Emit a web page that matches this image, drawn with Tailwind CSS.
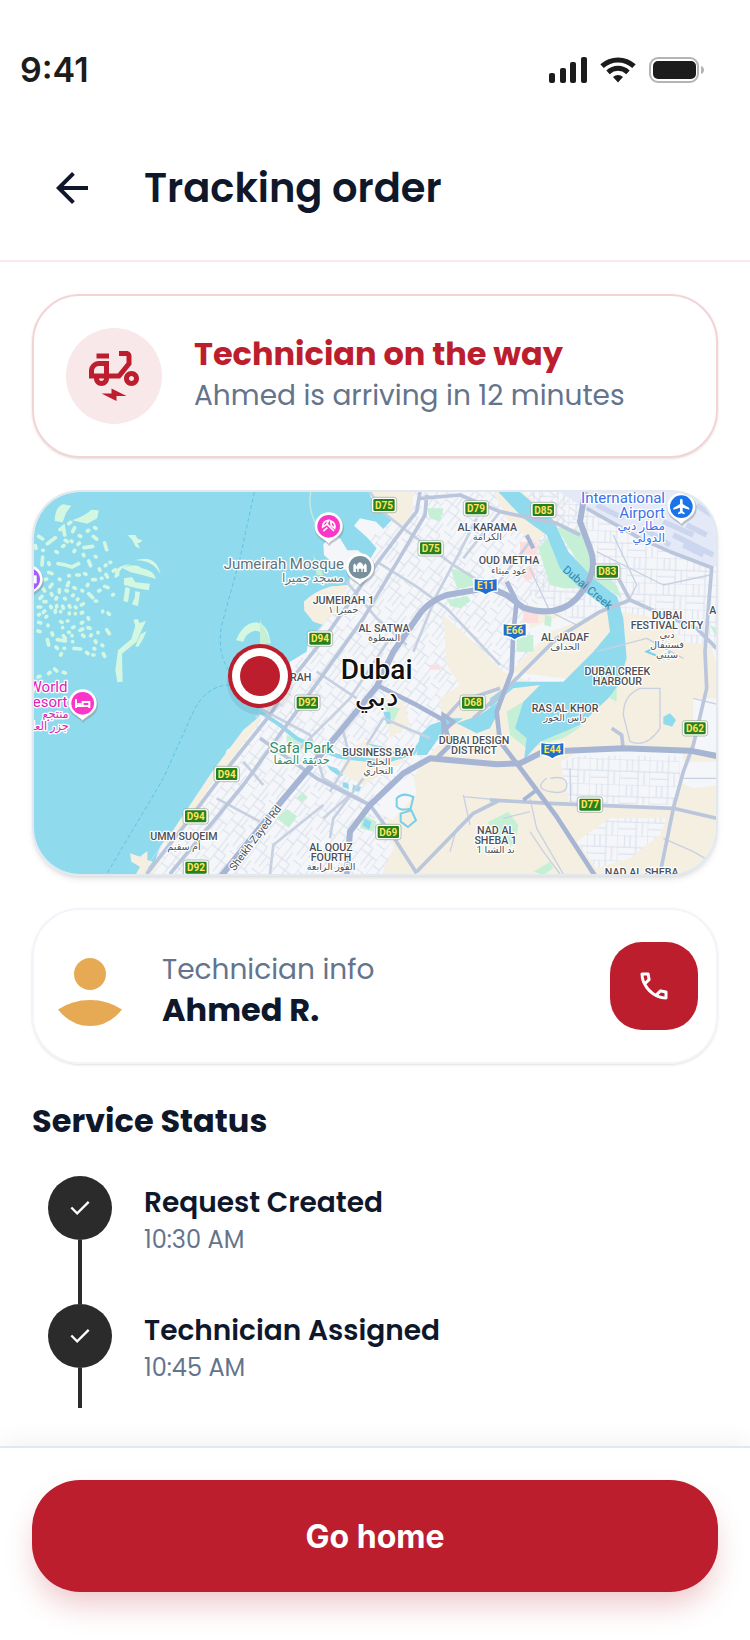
<!DOCTYPE html>
<html lang="en">
<head>
  <meta charset="UTF-8" />
  <meta name="viewport" content="width=device-width, initial-scale=1.0" />
  <title>Tracking order</title>
  <script src="https://cdn.jsdelivr.net/npm/@tailwindcss/browser@4"></script>
</head>
<body class="bg-white font-[Poppins,Inter,sans-serif] text-[#0f172a]">
<div class="flex min-h-screen flex-col">

  <!-- Status bar -->
  <div class="flex h-[116px] items-center justify-between pt-6 pr-[46px] pl-5 text-[#1c1c1c]">
    <span class="font-[Inter,sans-serif] text-[34px] leading-10 font-semibold">9:41</span>
    <div class="flex items-center gap-3">
      <svg class="h-[26px] w-[40px]" viewBox="0 0 40 26" fill="currentColor" aria-hidden="true">
        <rect x="1" y="16" width="6" height="10" rx="2" />
        <rect x="12" y="11" width="6" height="15" rx="2" />
        <rect x="22" y="5" width="6" height="21" rx="2" />
        <rect x="33" y="0" width="6" height="26" rx="2" />
      </svg>
      <svg class="h-[26px] w-[36px]" viewBox="0 0 36 26" fill="none" stroke="currentColor" aria-hidden="true">
        <path d="M2 9.2C11 .8 25 .8 34 9.2" stroke-width="5" />
        <path d="M8 15.3C14 10 22 10 28 15.3" stroke-width="5" />
        <path d="M18 25.500l-5-5.400c2.800-2.700 7.200-2.700 10 0z" fill="currentColor" stroke="none" />
      </svg>
      <svg class="h-[26px] w-[56px]" viewBox="0 0 56 26" aria-hidden="true">
        <rect x="2" y="1" width="48" height="24" rx="8" fill="none" stroke="#b4b4b4" stroke-width="2" />
        <rect x="5" y="4" width="43" height="18" rx="5" fill="currentColor" />
        <path d="M53 9c4 1 4 7 0 8z" fill="#b4b4b4" />
      </svg>
    </div>
  </div>

  <!-- Header -->
  <header class="flex items-center gap-8 border-b-2 border-[#f8e9eb] p-8">
    <button type="button" aria-label="Back" class="flex size-20 items-center justify-center">
      <svg class="size-12" viewBox="0 0 24 24" fill="currentColor" aria-hidden="true">
        <path d="M7.825 13l5.600 5.600L12 20l-8-8 8-8 1.425 1.400L7.825 11H20v2z" />
      </svg>
    </button>
    <h1 class="text-[40px] leading-[50px] font-semibold">Tracking order</h1>
  </header>

  <main class="flex flex-col gap-8 px-8 pt-8">

    <!-- Arrival card -->
    <section class="flex items-center gap-8 rounded-[48px] border-2 border-[#f4d2d5] p-8 shadow-sm">
      <div class="flex size-24 shrink-0 items-center justify-center rounded-full bg-[#f8e8ea] text-[#bd1e2d]">
        <svg class="size-[60px]" viewBox="0 1 24 24" fill="currentColor" aria-hidden="true">
          <path d="M19 5c0-1.100-.9-2-2-2h-3v2h3v2.650L13.520 12H10V7H6c-2.210 0-4 1.790-4 4v3h2c0 1.660 1.340 3 3 3s3-1.340 3-3h4.480L19 8.350V5zM4 12v-1c0-1.100.9-2 2-2h2v3H4zm3 3c-.55 0-1-.45-1-1h2c0 .55-.45 1-1 1z" />
          <path d="M5 4h5v2H5zM19 11c-1.660 0-3 1.340-3 3s1.340 3 3 3 3-1.340 3-3-1.340-3-3-3zm0 4c-.55 0-1-.45-1-1s.45-1 1-1 1 .45 1 1-.45 1-1 1zM7 20h4v-2l6 3h-4v2z" />
        </svg>
      </div>
      <div>
        <h2 class="text-[32px] leading-10 font-bold text-[#bd1e2d]">Technician on the way</h2>
        <p class="text-[28px] leading-11 text-[#64748b]">Ahmed is arriving in 12 minutes</p>
      </div>
    </section>

    <!-- Map -->
    <section class="overflow-hidden rounded-[48px] border-2 border-[#e2e8f0] shadow-md">
      <svg class="block h-auto w-full font-[Roboto,'DejaVu_Sans',sans-serif]" viewBox="12 21 2046 1146" role="img" aria-label="Map of Dubai">
        <defs>
          <pattern id="blocks" width="96" height="84" patternUnits="userSpaceOnUse" patternTransform="rotate(-52)">
            <path d="M0 0H96M0 26H96M0 54H62M22 0V26M62 0V54M40 26V84M80 54V84M0 70H40M62 40H96" fill="none" stroke="#d8e0ec" stroke-width="3" />
          </pattern>
          <pattern id="grid" width="90" height="76" patternUnits="userSpaceOnUse" patternTransform="rotate(2)">
            <path d="M0 0H90M0 36H90M20 0V36M36 0V36M54 0V76M72 36V76M90 0V76M0 56H54" fill="none" stroke="#d8e0ec" stroke-width="3" />
          </pattern>
          <g id="pin">
            <path d="M0 54C-8 40-44 34-44 0a44 44 0 0188 0c0 34-36 40-44 54z" fill="#8a94a0" opacity=".5" transform="translate(2 5)" />
            <path d="M0 52C-8 38-42 32-42 0a42 42 0 0184 0c0 32-34 38-42 52z" fill="#fff" />
          </g>
          <g id="green">
            <rect x="-38" y="-23" width="76" height="46" rx="8" fill="#fff" stroke="#8fa08f" stroke-width="2" />
            <rect x="-32" y="-18" width="64" height="36" rx="4" fill="#26801f" />
          </g>
          <g id="blue">
            <path d="M-35-24Q0-16 35-24V14Q18 14 0 26-18 14-35 14z" fill="#1f6fd0" stroke="#fff" stroke-width="4" />
          </g>
        </defs>

        <!-- sea -->
        <rect x="0" y="0" width="2070" height="1180" fill="#90daee" />
        <g fill="none" stroke="#5fc4de" stroke-width="3" stroke-dasharray="12 8">
          <path d="M673 21L630 220 575 420Q560 510 600 560" />
          <path d="M600 600Q530 600 490 680L400 880 230 1167" />
        </g>
        <path d="M842 21Q830 90 880 150" fill="none" stroke="#c8ecdf" stroke-width="4" />

        <!-- islands -->
        <g fill="#d3f7e0">
          <path d="M74 108Q74 66 100 58L124 62 108 84 98 112zM126 106Q170 90 184 74L206 76 202 100 172 116 146 110zM292 150l24 0 8 12 14 4-10 8-6 0 8 16-12-4-12-22z" />
          <path d="M276 248q40-16 60 2 36 6 42 32l-40-12-36-8zM282 280l24-4 10 16 44 4-4 20-36-6-38-10zM286 306l14 4-6 42-14-4zM316 318l14 4-6 42-18-6 8-20z" />
          <path d="M314 226q66-20 78 44-22-46-78-44zM254 280q-4-40 50-42-40 10-36 34z" />
          <path d="M310 404l14-2 4 12 20-6-8 16-20 46-44 36 2 84-16 2-6-36 8-60 40-34 12-40z M316 484l16-36 18-10-12 26-14 22z" />
          <path d="M618 466Q640 412 680 412 716 420 722 476L700 470Q700 434 672 438 648 444 640 470z" />
        </g>
        <g fill="none" stroke="#d3f7e0" stroke-linecap="round">
          <path d="M26 154l12 8M52 176l24-18M90 134l10-8 4 24M128 140l6-12M116 116l6-4M148 152l4 2M172 138l4-2M194 128l4 2M190 154l10 8M224 174l6 20M162 188l26-4M16 182l2 8M38 196l2 0M78 200l4 2M98 184l4-2M106 166l6 4M124 168l2 2M144 178l4-4M132 200l2-4M160 208l2 4M196 214l2 2M38 216l-2 24M56 234l2 4M84 236l22 4 20 6 20-10M176 228l6 14M208 252l2 4M226 242l2-2M240 232l2 0M250 258l6-4M56 262l10 4M88 282l2 2M116 272l2 0M140 270l8 0M116 292l-4 10M164 266l4 2M188 284l8 0M174 298l-2 4M214 280l2 0M228 268l4 8M42 284l8-2M66 298l-6 8M40 312l4 6M88 314l0 8M64 326l2 4M108 316l4 2M132 308l4 2M156 316l2 2M176 326l12 12M206 318l4-2M224 304l10 4M248 330l2-2M196 348l4 0M30 340l6-6M78 342l2-4M104 340l2 2M128 332l2-2M142 344l2-2M42 350l6 0M24 366l8 0M62 364l2 4M80 362l0 4M98 364l2 6M118 362l2 4M136 366l2 2M154 360l6-4M26 390l2-2M40 382l4-4M76 376l0 6M92 380l0 0M118 384l0 2M136 386l0 0M154 384l4-2M218 380l0-2M234 384l4 4M50 394l-2 2M26 412l6 2M54 420l0 2M92 410l4 2M112 408l2 0M128 428l4-2M154 414l4-2M174 398l2 4M24 438l6 2M98 428l0 0M116 442l2 0M150 436l8-4M174 428l6 2M68 450l-2-6M100 452l6 8M126 452l0 0M158 450l4 4M182 452l2-2M204 442l0 2M230 434l8 12M52 464l4 16M82 464l24 4M128 470l0 0M196 468l2 4M216 480l2 2M78 486l4 4M104 490l-2 0M132 490l20 2M192 490l2 2M92 510l2-4M170 502l4 4M188 510l4 0M220 506l4 8M74 552l6 6M56 566l4-4M100 562l6 2M24 576l6-2" stroke-width="11" />
        </g>

        <!-- land -->
        <path d="M1018 21L1030 60 1085 105 1060 132 1038 110 990 100 972 122 1014 160 1040 190 1018 226 984 196 952 196 930 160 905 150 880 178 882 210 912 238 960 262 958 300 900 305 850 330 822 350 824 378 860 402 884 400 880 420 836 462 830 500 780 530 760 590 712 640 685 700 640 735 625 775 590 795 580 835 550 855 545 895 500 930 490 965 450 1005 430 1035 390 1085 370 1145 320 1180H2070V0H1010z" fill="#f5f6f9" />
        <path d="M1018 21L1030 60 1085 105 1060 132 1014 160 1040 190 958 300 900 305 830 500 712 640 580 835 430 1035 320 1180H1300L1500 800 1500 400 1700 21z" fill="url(#blocks)" />
        <path d="M1500 0H2070V500H1800L1500 330z" fill="url(#grid)" />
        <g fill="#f5efe2">
          <path d="M1018 21H1150L1145 100 1112 128 1062 78zM822 350Q850 320 900 305L958 300 940 330 880 420 850 410 824 378zM640 735L700 685 680 720 600 830 540 900 500 990 400 1110 370 1167H320L370 1145 450 1005 550 855z" />
          <path d="M300 1105L330 1115 352 1098 352 1125 368 1130 340 1167H318L330 1145 304 1130z" />
          <path d="M1240 390L1330 470 1420 560 1500 590 1640 590 1780 380 1880 400 1960 470 2040 480 2070 560V1180H1050L1090 1090 1070 1000 1160 860 1240 760 1230 640 1290 600 1250 540z" />
          <path d="M1060 640L1120 650 1140 720 1080 760zM940 800L1000 770 1100 790 1120 830 1000 900 940 870zM1440 560L1560 440 1730 380 1760 440 1690 590zM1500 360L1600 390 1500 430z" />
          <path d="M1390 21h90l100 90-60 60-80-50z" />
        </g>
        <path d="M1150 875L1160 925 1090 1005 1042 985 1070 900zM1590 830L1650 800H1960V880L1930 965 1620 955 1600 880zM1990 640H2070V800H1990zM1960 830H2070V900L1990 910 1945 890zM1640 1070L1740 1000 1910 1000 1890 1050 1800 1120 1700 1150z" fill="#f5f6f9" />
        <path d="M1590 830L1650 812H1950V880L1930 960 1620 955 1600 880zM1640 1070L1740 1000 1910 1000 1890 1050 1800 1120 1700 1150z" fill="url(#grid)" />
        <path d="M1470 170h50v40h-50zM1480 370h45v45h-45zM1200 540h30v14h-30zM1470 260l30-20 20 30-30 20z" fill="#fbdedd" />

        <!-- airport -->
        <path d="M1590 21H2070V240L2030 250 1900 190 1680 80z" fill="#e3e9f6" />
        <path d="M1700 60L1780 100M1900 110l90 40M1930 150l120 60M1960 180l60 30M2000 60l60 40M1840 130l80 50M1970 120l60 30" stroke="#ccd6ee" stroke-width="16" fill="none" />

        <!-- parks -->
        <g fill="#c5f0d6">
          <path d="M1525 190L1560 150 1600 250 1650 310 1600 310 1560 300zM1580 130Q1650 120 1660 160L1700 240 1760 300 1775 340 1700 290 1650 240z" />
          <path d="M1262 252l60 10 10 40-50 10zM1252 345l60-12 10 15-30 22-30-6zM1190 70l50 0-10 40-30-10zM1460 450h50v50h-50zM1545 390l20 5-2 30-20-5z" />
          <path d="M1430 680L1480 650 1560 590 1500 700 1590 740 1660 720 1600 760 1490 790 1440 750zM1720 600l40 10 0 40-20-10z" />
          <path d="M770 750l50 20-10 40-40-10zM740 1000l30-28 32 22-26 34zM800 938l16-16 16 16-16 14zM1000 990l40 20-10 30-40-10zM1375 1010l60-30 30 40-10 60-80 0zM690 405l30 60-20 30-10-20zM1060 660l50 10-20 40zM1510 1160l50-30 10 20-30 20zM850 210l30 60-20 0zM2040 420l20 10v30z" />
        </g>

        <!-- creek and lakes -->
        <g fill="#90daee">
          <path d="M1405 21H1470L1570 105 1615 200 1690 280 1762 335 1780 400 1790 520 1765 600 1735 640 1650 720 1530 770 1482 825 1490 760 1455 730 1480 650 1530 600 1450 610 1380 668 1380 640 1450 590H1600L1690 500 1740 440 1730 370 1650 310 1590 250 1550 150 1480 100z" />
          <path d="M1280 715L1350 690 1412 645V670L1380 730 1340 745zM1170 750l30-30 60-20 40 0-60 40-50 70-30 0zM1900 695l20-10 18 20-12 20-26-8zM1060 680l20 0 4 36-14 0z" />
          <path d="M940 890l16 6 0 16-18-6zM970 900l24 6-8 14-20-4zM1004 1000l20 10-6 24-20-12zM890 840l30 10 20 20-10 5-30-20zM1010 775l50 10 40 20-20 4z" />
        </g>
        <path d="M1180 760L1150 805 1060 830 930 815 860 790 800 760 750 720 690 680" fill="none" stroke="#90daee" stroke-width="12" />
        <path d="M1100 940q20-20 50-4l-8 34q-30 10-42-6zM1112 986l32-10 14 30-24 20-22-16zM1850 500l40-20 30 20-20 20z" fill="none" stroke="#77cfe8" stroke-width="6" />

        <!-- minor roads -->
        <g fill="none" stroke="#c8d1e1" stroke-width="8" stroke-linejoin="round">
          <path d="M1020 21L1070 90 1120 130 1270 240 1350 290M1040 230L1160 305 1250 370 1410 540M950 290L1040 400 1130 480M1340 100L1290 200 1220 330 1150 500M1410 80L1300 220M1500 170L1400 300" />
          <path d="M690 670L840 750 880 880 1020 960M860 560L980 640M800 800L960 640 1080 460M1010 780L1060 700 1200 760M880 1000L960 930M720 1167L730 1080 880 960M900 1060L910 1000 1000 880M940 740L960 820 900 920M640 830L700 900M560 940L690 1010" />
          <path d="M1500 1040L1540 1100 1590 1167M1500 940L1520 1030 1600 1167M1420 1000L1500 980M1330 985L1280 1030 1260 1100M1500 250L1560 380 1640 420M1700 500L1850 460 1960 520M1990 640L2070 660M1960 880H2060M1900 1060L1990 1100 2060 1140M1300 930L1320 1020M1300 935L1410 945M1560 880q50-10 50 20t-50 20-10-40M1620 850L1622 950M1700 200L1900 300 2040 270M1750 150L1820 300 1800 340M1780 690q0-60 50-80h60v120q-40 60-90 40z" stroke-width="4" />
        </g>
        <g fill="none" stroke="#bac6dc" stroke-width="11" stroke-linejoin="round">
          <path d="M1170 21L1160 80 1120 130 1030 250 890 450 780 590 720 690 600 840 480 1000 350 1167" />
          <path d="M1190 30L1185 90 1120 200 1000 400 850 610 640 900 420 1167M1170 40L1290 30 1410 80 1580 115 1650 150" />
          <path d="M1670 70L1830 160 1920 200 2050 250M1800 345L1710 380 1580 460 1440 600 1330 700M1700 240L1760 270 1800 345 1900 390 2000 430 2060 490" />
          <path d="M1380 945L1560 955 1930 970 2060 1000M1160 1160L1330 985 1410 945M1020 960L1090 1055 1160 1165M1240 705L1290 650 1410 610M1745 730l30 20 5 45" />
          <path d="M2045 250L2035 370 2025 500 2030 610 1990 780 1960 860 1930 970 1890 1167M690 760L860 880 1020 960" />
        </g>
        <!-- highways -->
        <g fill="none" stroke="#a6b5d3" stroke-width="18" stroke-linejoin="round">
          <path d="M560 1190L720 990 930 740 1040 605 1090 500 1160 400Q1190 350 1250 330L1380 308 1430 330 1480 368Q1580 400 1640 340 1710 260 1680 190L1650 110 1665 21" />
          <path d="M950 1167L960 1040 1020 960 1120 865 1200 820 1400 838 1470 835 1540 800 1780 790 1980 797 2070 815" />
          <path d="M1430 290L1460 350 1450 440 1445 560 1400 680 1410 770 1460 835 1520 915 1580 995 1700 1180M1040 600L1150 655 1240 705 1260 780 1220 820" stroke-width="14" />
        </g>
        <path d="M1490 150l20 40M1520 915l-40 30M1240 690l30 20-30 30z" stroke="#a6b5d3" stroke-width="12" fill="none" />

        <!-- area labels -->
        <g fill="#4a5058" stroke="#fff" stroke-width="7" paint-order="stroke" stroke-linejoin="round" font-size="32" font-weight="500" text-anchor="middle">
          <text x="940" y="356">JUMEIRAH 1</text>
          <text x="1062" y="440">AL SATWA</text>
          <text x="1372" y="137">AL KARAMA</text>
          <text x="1437" y="238">OUD METHA</text>
          <text x="1605" y="468">AL JADAF</text>
          <text x="1911" y="402">DUBAI</text>
          <text x="1911" y="432">FESTIVAL CITY</text>
          <text x="1762" y="571">DUBAI CREEK</text>
          <text x="1762" y="601">HARBOUR</text>
          <text x="1605" y="680">RAS AL KHOR</text>
          <text x="1332" y="777">DUBAI DESIGN</text>
          <text x="1332" y="807">DISTRICT</text>
          <text x="1045" y="813">BUSINESS BAY</text>
          <text x="903" y="1097">AL QOUZ</text>
          <text x="903" y="1127">FOURTH</text>
          <text x="1397" y="1047">NAD AL</text>
          <text x="1397" y="1077">SHEBA 1</text>
          <text x="1835" y="1174">NAD AL SHEBA</text>
          <text x="462" y="1065">UMM SUQEIM</text>
          <text x="812" y="588">RAH</text>
          <text x="2048" y="388">A</text>
          <g font-size="29" font-weight="400">
            <text x="940" y="385">جميرا ١</text>
            <text x="1062" y="468">السطوة</text>
            <text x="1372" y="165">الكرامة</text>
            <text x="1437" y="266">عود ميثاء</text>
            <text x="1605" y="495">الجداف</text>
            <text x="1911" y="460">دبي</text>
            <text x="1911" y="488">فستيفال</text>
            <text x="1911" y="518">سيتي</text>
            <text x="1605" y="709">راس الخور</text>
            <text x="1045" y="840">الخليج</text>
            <text x="1045" y="868">التجاري</text>
            <text x="903" y="1155">القوز الرابعة</text>
            <text x="1397" y="1105">ند الشبا 1</text>
            <text x="462" y="1095">أم سقيم</text>
          </g>
          <text transform="translate(684 1066) rotate(-53)" font-weight="400">Sheikh Zayed Rd</text>
        </g>
        <g stroke="#fff" stroke-width="8" paint-order="stroke" stroke-linejoin="round" font-size="45">
          <g fill="#5d7480" text-anchor="end">
            <text x="942" y="253">Jumeirah Mosque</text>
            <text x="942" y="290" font-size="36">مسجد جميرا</text>
          </g>
          <g fill="#2f8f6b" text-anchor="middle">
            <text x="815" y="804">Safa Park</text>
            <text x="815" y="838" font-size="34">حديقة الصفا</text>
          </g>
          <g fill="#e319b8" text-anchor="end">
            <text x="112" y="620">World</text>
            <text x="112" y="665">Resort</text>
            <text x="116" y="700" font-size="34">منتجع</text>
            <text x="116" y="736" font-size="34">جزر العالم</text>
          </g>
          <g fill="#3c72e6" text-anchor="end">
            <text x="1905" y="53">International</text>
            <text x="1905" y="98">Airport</text>
            <text x="1905" y="135" font-size="36">مطار دبي</text>
            <text x="1905" y="170" font-size="36">الدولي</text>
          </g>
          <g fill="#111" text-anchor="middle">
            <text x="1040" y="583" font-size="84" font-weight="500">Dubai</text>
            <text x="1040" y="662" font-size="84">دبي</text>
          </g>
        </g>
        <text transform="translate(1596 258) rotate(40)" font-size="34" fill="#2f86a8">Dubai Creek</text>

        <!-- road shields -->
        <g fill="#ffe45c" font-size="30" font-weight="700" text-anchor="middle">
          <use href="#green" x="1062" y="60" /><text x="1062" y="71">D75</text>
          <use href="#green" x="1338" y="70" /><text x="1338" y="81">D79</text>
          <use href="#green" x="1202" y="190" /><text x="1202" y="201">D75</text>
          <use href="#green" x="870" y="461" /><text x="870" y="472">D94</text>
          <use href="#green" x="1540" y="75" /><text x="1540" y="86">D85</text>
          <use href="#green" x="1732" y="260" /><text x="1732" y="271">D83</text>
          <use href="#green" x="590" y="867" /><text x="590" y="878">D94</text>
          <use href="#green" x="497" y="994" /><text x="497" y="1005">D94</text>
          <use href="#green" x="498" y="1148" /><text x="498" y="1159">D92</text>
          <use href="#green" x="832" y="653" /><text x="832" y="664">D92</text>
          <use href="#green" x="1328" y="653" /><text x="1328" y="664">D68</text>
          <use href="#green" x="1075" y="1041" /><text x="1075" y="1052">D69</text>
          <use href="#green" x="1995" y="730" /><text x="1995" y="741">D62</text>
          <use href="#green" x="1680" y="959" /><text x="1680" y="970">D77</text>
          <use href="#blue" x="1367" y="304" /><text x="1367" y="313">E11</text>
          <use href="#blue" x="1454" y="439" /><text x="1454" y="448">E66</text>
          <use href="#blue" x="1567" y="796" /><text x="1567" y="805">E44</text>
        </g>

        <!-- place pins -->
        <g transform="translate(896 124)">
          <use href="#pin" />
          <circle r="34" fill="#fb35c8" />
          <path d="M-18 2Q-18-16 0-18L-6-6zM6-16q16 6 12 22l-10-8zM-4-6L16 14M-16 14l12-10" fill="none" stroke="#fff" stroke-width="5" />
        </g>
        <g transform="translate(990 247)">
          <use href="#pin" />
          <circle r="34" fill="#78909c" />
          <path d="M-20 14V-6l4-6 4 6v4q4-10 12-14 8 4 12 14v-4l4-6 4 6v20h-8V4h-4v10h-4V4h-8v10h-4V4h-4v10z" fill="#fff" />
        </g>
        <g transform="translate(158 655)">
          <use href="#pin" />
          <circle r="34" fill="#fb35c8" />
          <path d="M-20-12v26M-20 8h40M20 14V-4H0V6M-16 2h12" fill="none" stroke="#fff" stroke-width="6" />
        </g>
        <g transform="translate(-4 283)">
          <use href="#pin" />
          <circle r="34" fill="#a75bff" />
          <rect x="4" y="-12" width="20" height="24" fill="#fff" />
        </g>
        <g transform="translate(1954 65)">
          <use href="#pin" />
          <circle r="34" fill="#1a73e8" />
          <path d="M0-24q4 0 4 7v9L24 4v5L4 3v11l6 5v4L0 20l-10 3v-4l6-5V3l-20 6V4l20-12v-9q0-7 4-7z" fill="#fff" />
        </g>

        <!-- technician position -->
        <circle cx="690" cy="590" r="100" fill="#0f172a" opacity=".08" />
        <circle cx="690" cy="573" r="96" fill="#bd1e2d" />
        <circle cx="690" cy="573" r="84" fill="#fff" />
        <circle cx="690" cy="573" r="60" fill="#bd1e2d" />
      </svg>
    </section>

    <!-- Technician card -->
    <section class="flex items-center gap-8 rounded-[48px] border-2 border-[#f1f5f9] py-8 pr-[18px] pl-4 shadow-sm">
      <svg class="size-20 shrink-0" viewBox="0 0 80 80" fill="#e6aa54" aria-hidden="true">
        <circle cx="40" cy="28" r="16" />
        <path d="M8 63.500Q22 54 40 54T72 63.500Q59 80 40 80T8 63.500z" />
      </svg>
      <div class="grow pt-2">
        <p class="text-[28px] leading-10 text-[#64748b]">Technician info</p>
        <p class="text-[32px] leading-10 font-bold">Ahmed R.</p>
      </div>
      <button type="button" aria-label="Call technician" class="flex size-[88px] shrink-0 items-center justify-center rounded-[32px] bg-[#bd1e2d] text-white">
        <svg class="size-9" viewBox="0 0 24 24" fill="currentColor" aria-hidden="true">
          <path d="M19.950 21q-3.125 0-6.175-1.363T8.225 15.775 4.363 10.225 3 4.050q0-.45.3-.75t.75-.3H8.100q.35 0 .625.238t.325.562l.65 3.500q.05.4-.025.675T9.400 8.450L6.975 10.900q.5.925 1.187 1.787t1.513 1.663q.775.775 1.625 1.438T13.100 17l2.350-2.350q.225-.225.588-.337t.712-.063l3.450.7q.35.1.575.363T21 15.900v4.050q0 .45-.3.75t-.75.3zM6.025 9l1.650-1.650L7.250 5H5.025q.125 1.025.35 2.025T6.025 9zm8.950 8.950q.975.425 1.988.675T19 18.950v-2.200l-2.350-.475-1.675 1.675z" />
        </svg>
      </button>
    </section>

    <!-- Timeline -->
    <section>
      <h2 class="text-[32px] leading-[50px] font-bold">Service Status</h2>
      <ol class="mt-[30px] pl-4">
        <li class="flex gap-8">
          <div class="flex flex-col items-center">
            <span class="flex size-16 items-center justify-center rounded-full bg-[#2b2b2b] text-white">
              <svg class="size-7" viewBox="0 0 24 24" fill="currentColor" aria-hidden="true"><path d="M9.550 18l-5.700-5.700 1.425-1.425L9.550 15.150l9.175-9.175L20.150 7.400z" /></svg>
            </span>
            <span class="h-16 w-1 bg-[#2b2b2b]"></span>
          </div>
          <div class="pt-2">
            <h3 class="text-[28px] leading-[38px] font-semibold">Request Created</h3>
            <p class="text-2xl leading-9 text-[#64748b]">10:30 AM</p>
          </div>
        </li>
        <li class="flex gap-8">
          <div class="flex flex-col items-center">
            <span class="flex size-16 items-center justify-center rounded-full bg-[#2b2b2b] text-white">
              <svg class="size-7" viewBox="0 0 24 24" fill="currentColor" aria-hidden="true"><path d="M9.550 18l-5.700-5.700 1.425-1.425L9.550 15.150l9.175-9.175L20.150 7.400z" /></svg>
            </span>
            <span class="h-10 w-1 bg-[#2b2b2b]"></span>
          </div>
          <div class="pt-2">
            <h3 class="text-[28px] leading-[38px] font-semibold">Technician Assigned</h3>
            <p class="text-2xl leading-9 text-[#64748b]">10:45 AM</p>
          </div>
        </li>
      </ol>
    </section>
  </main>

  <!-- Bottom action -->
  <footer class="mt-auto border-t-2 border-[#e2e8f0] bg-white px-8 pt-8 pb-12 shadow-[0_-4px_24px_rgba(0,0,0,0.06)]">
    <button type="button" class="h-28 w-full rounded-[48px] bg-[#bd1e2d] pt-0.5 font-[Inter,sans-serif] text-[32px] font-bold text-white shadow-[0_16px_30px_-4px_rgba(189,30,45,0.25)]">Go home</button>
  </footer>

</div>
</body>
</html>
